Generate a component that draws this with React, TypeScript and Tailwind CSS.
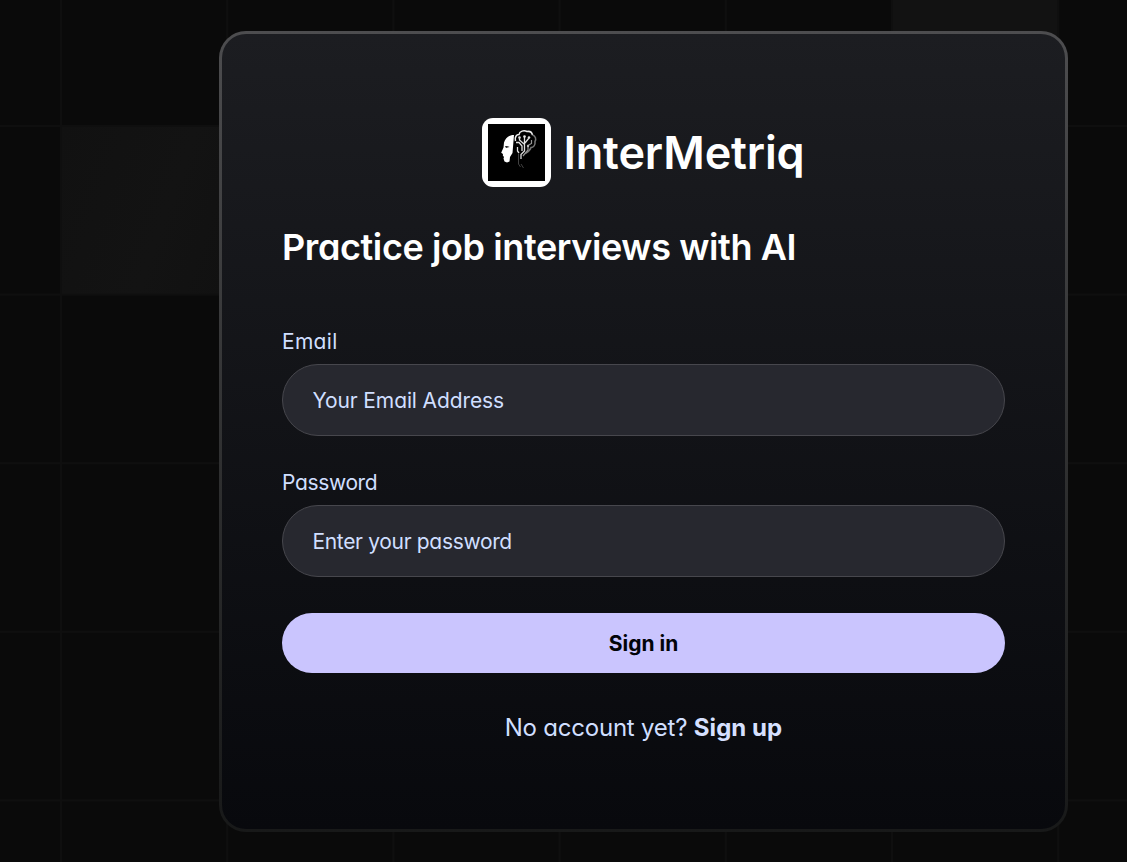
import React from "react";

function LogoMark() {
  return (
    <div className="flex h-[69px] w-[69px] items-center justify-center rounded-[11px] bg-white">
      <svg width="57" height="57" viewBox="0 0 57 57" className="bg-black" aria-hidden="true">
        <path
          d="M26 11C21 11 17.500 14 16 18.500L15.500 23.500L13.200 28.700L15 30L14.800 31.500L16 33L15.500 34.500L16.500 37.500L19 38.500L21.500 37.500L22 33L24.500 29Z"
          fill="#fff"
        />
        <path d="M17 22Q19.500 21.500 21.500 23L18 24Z" fill="#222" />
        <path d="M27.500 17C26.500 13 28.500 10.500 31 10.500C31.500 7 36 6 39 7.500C42 7 44 8.500 44.500 11" fill="none" stroke="#eee" strokeWidth="1.5" />
        <path d="M44.500 11C47.500 12 48.500 15 47 17.500C47.500 21 45.500 23.500 43 23.500C42 27 40 28 37.500 29.500" fill="none" stroke="#777" strokeWidth="1.5" />
        <path
          d="M28 18.500H31L34 22V27M36.500 13V27L33 30.500V35M41 14L37 19M31.500 14V16L36 20M29.500 23V27L31 29"
          fill="none"
          stroke="#dedede"
          strokeWidth="1.3"
        />
        <path d="M40 22V26L35 32M40 21.500L43.500 19.500V16" fill="none" stroke="#969696" strokeWidth="1.2" />
        <circle cx="36.500" cy="12.500" r="1.3" fill="#eee" />
        <circle cx="41" cy="13.500" r="1.3" fill="#ddd" />
        <circle cx="31.500" cy="13.500" r="1.3" fill="#ddd" />
        <circle cx="40" cy="22" r="1.2" fill="#bbb" />
        <path d="M30.500 30V40L32.500 43M33 40L35.500 44" stroke="#414141" fill="none" />
      </svg>
    </div>
  );
}

type FieldProps = {
  id: string;
  label: string;
  type: string;
  placeholder: string;
  tracking: string;
  labelTracking: string;
};

function Field({ id, label, type, placeholder, tracking, labelTracking }: FieldProps) {
  return (
    <div className="flex flex-col gap-[10px]">
      <label htmlFor={id} className={`self-start text-[21px] leading-6 text-[#d0dfff] ${labelTracking}`}>
        {label}
      </label>
      <input
        id={id}
        type={type}
        placeholder={placeholder}
        className={`h-[72px] w-full rounded-full border border-[#47474d] bg-[#27282f] pr-[30px] pl-[29.5px] text-[21px] text-[#d0dfff] outline-none placeholder:text-[#d0dfff] placeholder:opacity-100 ${tracking}`}
      />
    </div>
  );
}

export default function App() {
  return (
    <main
      className="h-[862px] w-full overflow-hidden bg-[#0a0a0a] pt-[31px] pl-[219px] [font-family:Inter,'Liberation_Sans',sans-serif] [font-feature-settings:'cv11'] [background-image:linear-gradient(90deg,#0f0f0f_2px,transparent_2px),linear-gradient(#0f0f0f_2px,transparent_2px),linear-gradient(110deg,#111,#131313_60%,#111),linear-gradient(#121212,#121212)] [background-position:60px_0,0_125px,61px_125px,890.5px_0] [background-repeat:repeat,repeat,no-repeat,no-repeat] [background-size:166.2px_168.6px,166.2px_168.6px,166px_169px,167px_125px]"
    >
      <div className="h-[801px] w-[849px] rounded-[27px] bg-linear-to-b from-[#4d4d4f] to-[#181919] p-[3px]">
        <section className="h-full rounded-[24px] bg-linear-to-b from-[#1c1d21] to-[#08090d] px-[60px] pt-[84px]">
          <div className="flex items-center justify-center gap-3">
            <LogoMark />
            <h1 className="text-[45px] leading-[60px] font-semibold tracking-[-0.15px] text-white">InterMetriq</h1>
          </div>
          <h2 className="mt-[42px] text-[36px] leading-9 font-semibold tracking-[-0.4px] whitespace-nowrap text-white">
            Practice job interviews with AI
          </h2>
          <form className="mt-[65px]" onSubmit={(e) => e.preventDefault()}>
            <div className="flex flex-col gap-[35px]">
              <Field id="email" label="Email" type="email" placeholder="Your Email Address" tracking="tracking-[-0.12px]" labelTracking="tracking-[0.3px]" />
              <Field id="password" label="Password" type="password" placeholder="Enter your password" tracking="tracking-[-0.33px]" labelTracking="tracking-[-0.35px]" />
            </div>
            <button type="submit" className="mt-9 h-[60px] w-full rounded-full bg-[#cac5fe] pt-[2px] text-[21px] font-bold text-[#020408]">
              Sign in
            </button>
          </form>
          <p className="mt-[37px] text-center text-[24px] leading-9 tracking-[-0.22px] text-[#d0dfff]">
            No account yet? <a href="#" className="font-bold tracking-[0.05px] text-[#d6e0ff]">Sign up</a>
          </p>
        </section>
      </div>
    </main>
  );
}
